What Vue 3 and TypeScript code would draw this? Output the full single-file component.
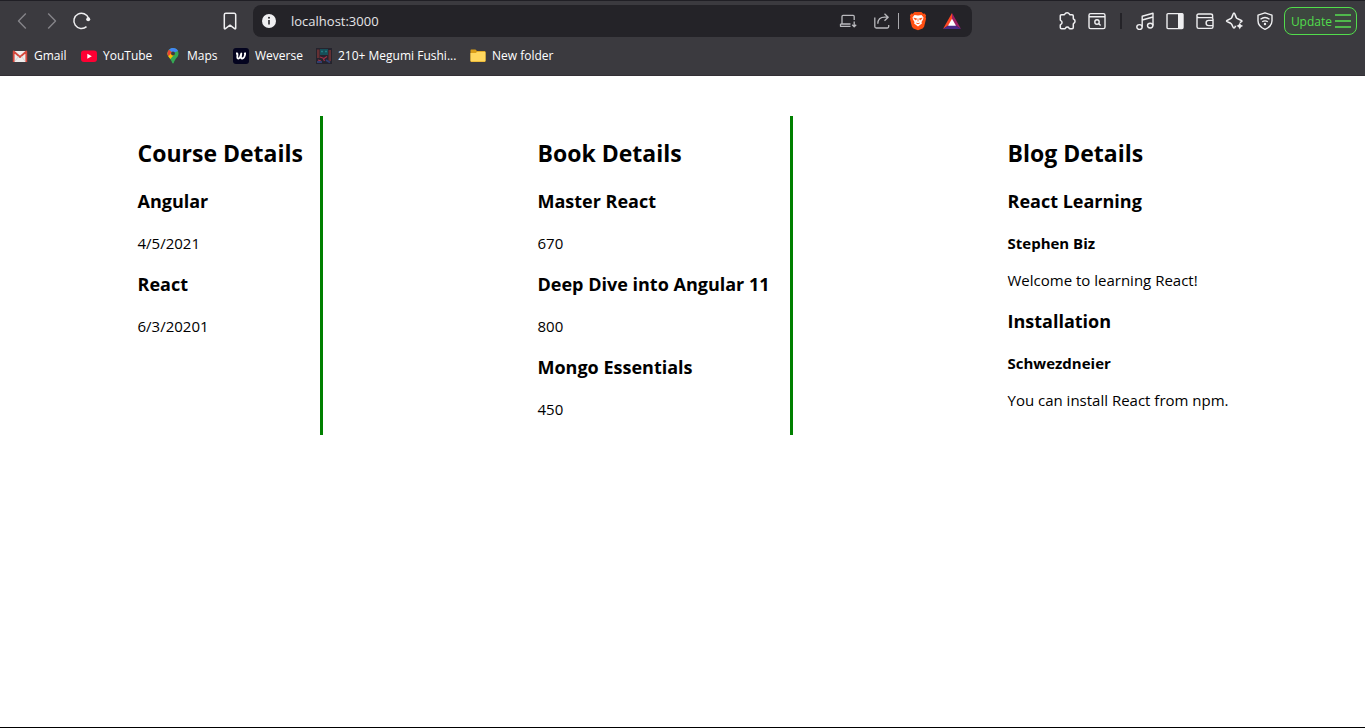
<script setup lang="ts">
interface Line { kind: 'h3' | 'h4' | 'p'; text: string }
interface Column { title: string; lines: Line[] }

const courses = [
  { name: 'Angular', date: '4/5/2021' },
  { name: 'React', date: '6/3/20201' },
]
const books = [
  { name: 'Master React', price: '670' },
  { name: 'Deep Dive into Angular 11', price: '800' },
  { name: 'Mongo Essentials', price: '450' },
]
const blogs = [
  { name: 'React Learning', author: 'Stephen Biz', text: 'Welcome to learning React!' },
  { name: 'Installation', author: 'Schwezdneier', text: 'You can install React from npm.' },
]

const columns: Column[] = [
  {
    title: 'Course Details',
    lines: courses.flatMap((c): Line[] => [{ kind: 'h3', text: c.name }, { kind: 'p', text: c.date }]),
  },
  {
    title: 'Book Details',
    lines: books.flatMap((b): Line[] => [{ kind: 'h3', text: b.name }, { kind: 'p', text: b.price }]),
  },
  {
    title: 'Blog Details',
    lines: blogs.flatMap((b): Line[] => [
      { kind: 'h3', text: b.name },
      { kind: 'h4', text: b.author },
      { kind: 'p', text: b.text },
    ]),
  },
]
</script>

<template>
  <div class="window">
    <header class="chrome">
      <div class="toolbar">
        <div class="nav">
          <button class="tool dim" aria-label="Back">
            <svg width="20" height="20" viewBox="0 0 20 20"><path d="M13.800 2.500 6.500 10l7.300 7.500" /></svg>
          </button>
          <button class="tool dim" aria-label="Forward">
            <svg width="20" height="20" viewBox="0 0 20 20"><path d="M6.200 2.500 13.500 10l-7.300 7.500" /></svg>
          </button>
          <button class="tool" aria-label="Reload">
            <svg width="20" height="20" viewBox="0 0 20 20">
              <path d="M14.500 15.600A7.600 7.600 0 1 1 16.600 7.200" stroke-width="1.500" />
              <circle cx="16.200" cy="8.300" r="2" class="fill" />
            </svg>
          </button>
          <button class="tool mark" aria-label="Bookmark this tab">
            <svg width="20" height="20" viewBox="0 0 20 20">
              <path d="M5.800 2.300h8.400a1.500 1.500 0 0 1 1.500 1.500v13.400c0 .7-.6.9-1.100.5L10 14.200l-4.600 3.500c-.5.4-1.100.2-1.100-.5V3.800a1.500 1.500 0 0 1 1.500-1.500z" stroke-width="1.500" />
            </svg>
          </button>
        </div>

        <div class="address">
          <button class="small" aria-label="Site information">
            <svg width="14" height="14" viewBox="0 0 14 14">
              <circle cx="7" cy="7" r="7" class="fill" />
              <path d="M7 6v4.500" stroke="#28272c" stroke-width="1.600" />
              <circle cx="7" cy="3.800" r="1" fill="#28272c" stroke="none" />
            </svg>
          </button>
          <input class="url" type="text" aria-label="Address" value="localhost:3000" />
          <div class="actions">
            <button class="small grey" aria-label="Install app">
              <svg width="18" height="18" viewBox="0 0 18 18">
                <path d="M15.200 8V4.400a1 1 0 0 0-1-1H4a1 1 0 0 0-1 1v7.400M1.500 12h10M1.500 12v2.300h10M15.200 9.500v5M13.200 12.700l2 2 2-2" stroke-width="1.300" />
              </svg>
            </button>
            <button class="small grey" aria-label="Share">
              <svg width="18" height="18" viewBox="0 0 18 18">
                <path d="M1.800 5.500v9a1.500 1.500 0 0 0 1.500 1.500h10.900a1.500 1.500 0 0 0 1.500-1.500V13M4.800 11.800c.1-4.200 3-6.600 7-6.600h3.400M11.500 1.800 15.200 5.200l-3.700 3.600" stroke-width="1.300" />
              </svg>
            </button>
            <span class="bar"></span>
            <button class="small" aria-label="Brave Shields">
              <svg width="18" height="20" viewBox="0 0 18 20">
                <path d="M5.500 1h7l1.700 1.700 1.500-.2 1.400 2-.5 1.500.5 1.500-2 8.200-1.500 1.800L9 19.200l-4.600-1.700-1.500-1.800-2-8.200.5-1.500-.5-1.500 1.400-2 1.500.2z" fill="#ff4f12" stroke="none" />
                <path d="m5.500 4 3.500.5 3.500-.5 2 2.500-.5 2-1.500 2.500.4 1.400L9 15.400l-3.900-3 .4-1.400L4 8.500l-.5-2z" fill="#fff" stroke="none" />
                <path d="m4.800 7.200 2.700.5L6.800 9zM13.200 7.200l-2.700.5.7 1.300zM7.300 12 9 12.800l1.700-.8M9 7.500v3" stroke="#ff4f12" fill="#ff4f12" stroke-width=".8" />
              </svg>
            </button>
            <button class="small" aria-label="Brave Rewards">
              <svg width="18" height="16" viewBox="0 0 18 16">
                <path d="M9 0 0 16l9-6z" fill="#ff4724" stroke="none" />
                <path d="m9 0 9 16-9-6z" fill="#9e1f63" stroke="none" />
                <path d="M0 16h18l-9-6z" fill="#4a2a86" stroke="none" />
                <path d="m9 5.700 4 7H5z" fill="#fff" stroke="none" />
              </svg>
            </button>
          </div>
        </div>

        <div class="extras">
          <button class="tool" aria-label="Extensions">
            <svg width="20" height="20" viewBox="0 0 20 20">
              <path d="M4.500 3.800h2.600c.5 0 .6-.3.800-.8.700-1.700 3.700-1.700 4.400 0 .2.500.3.800.8.800h2c.8 0 1.200.4 1.200 1.200v2.400c0 .5.200.7.600.9 1.500.7 1.500 3.200 0 3.900-.4.200-.6.400-.6.900v3.400c0 .8-.4 1.200-1.200 1.200h-2.300c-.5 0-.6-.3-.8-.7-.6-1.300-2.800-1.300-3.400 0-.2.400-.3.700-.8.700H4.500c-.8 0-1.200-.4-1.200-1.200v-2.300c0-.5.200-.6.600-.8 1.500-.7 1.500-3.100 0-3.800-.4-.2-.6-.4-.6-.9V5c0-.8.400-1.200 1.200-1.200z" stroke-width="1.500" />
            </svg>
          </button>
          <button class="tool" aria-label="Search tabs">
            <svg width="20" height="20" viewBox="0 0 20 20">
              <rect x="2" y="2.600" width="16" height="15" rx="1.600" />
              <path d="M2 5.800h16M11.600 12.600l2 2" />
              <circle cx="10" cy="11" r="2.200" />
            </svg>
          </button>
          <span class="divider"></span>
          <button class="tool" aria-label="Media">
            <svg width="20" height="20" viewBox="0 0 20 20">
              <path d="M7.200 15.800V5.200L18 2.300v12.200M7.200 9 18 6" />
              <ellipse cx="4.500" cy="16" rx="2.700" ry="2.400" /><ellipse cx="15.200" cy="14.600" rx="2.700" ry="2.400" />
            </svg>
          </button>
          <button class="tool" aria-label="Sidebar">
            <svg width="20" height="20" viewBox="0 0 20 20">
              <rect x="2" y="2.600" width="16" height="15" rx="1" /><path d="M13 2.600h5v15h-5z" class="fill" />
            </svg>
          </button>
          <button class="tool" aria-label="Wallet">
            <svg width="20" height="20" viewBox="0 0 20 20">
              <path d="M2 4.700v11c0 1 .7 1.700 1.700 1.700h12.600c1 0 1.700-.7 1.700-1.700V8.300c0-1-.7-1.700-1.700-1.700H3.700C1.300 6.600 1.300 3 3.700 3h12c1.300 0 1.900.7 1.900 1.700V7M18 9.400h-4.300a2.600 2.600 0 0 0 0 5.200H18" />
            </svg>
          </button>
          <button class="tool" aria-label="Leo AI">
            <svg width="20" height="20" viewBox="0 0 20 20">
              <path d="M9 2c1.200 0 1.300 3.600 2.800 5.200C13.300 8.700 17 8.800 17 10c0 .8-1 1-2.200 1.500M9 2C7.800 2 7.700 5.600 6.200 7.200 4.700 8.700 1.500 8.800 1.500 10s3.200 1.300 4.700 2.800C7.700 14.400 7.800 17 9 17c.8 0 1-.8 1.500-2.200" stroke-width="1.600" />
              <path d="M14.800 11.600c.6 2 1.300 2.700 3.400 3.400-2.100.7-2.800 1.400-3.400 3.500-.7-2.100-1.400-2.800-3.500-3.500 2.100-.7 2.800-1.400 3.500-3.400z" class="fill" />
            </svg>
          </button>
          <button class="tool" aria-label="VPN">
            <svg width="20" height="20" viewBox="0 0 20 20">
              <path d="M10 1.800 17 4.200v5.600c0 4-2.800 6.800-7 8.600-4.200-1.800-7-4.600-7-8.600V4.200z" />
              <path d="M5.500 8.200c2.700-2 6.300-2 9 0M7.200 10.800c1.700-1.200 3.900-1.200 5.600 0" stroke-width="1.300" />
              <circle cx="10" cy="13" r="1.200" class="fill" />
            </svg>
          </button>
          <button class="update">
            Update
            <svg width="16" height="14" viewBox="0 0 16 14"><path d="M0 1h16M0 7h16M0 13h16" stroke="#50b84c" stroke-width="2" /></svg>
          </button>
        </div>
      </div>

      <nav class="bookmarks" aria-label="Bookmarks">
        <a href="#">
          <svg width="16" height="16" viewBox="0 0 16 16">
            <path d="M1 3h14v11H1z" fill="#eeecec" stroke="none" />
            <path d="M1.700 14V3.500L8 9l6.300-5.500V14" stroke="#d5483d" stroke-width="1.800" />
            <path d="m3 13 3.500-4.500M13 13 9.500 8.500" stroke="#cfcccc" stroke-width=".8" />
          </svg>
          Gmail
        </a>
        <a href="#">
          <svg width="16" height="16" viewBox="0 0 16 16">
            <rect y="2.500" width="16" height="11.500" rx="3" fill="#ff0033" stroke="none" />
            <path d="m6.300 5.800 4.500 2.500-4.500 2.500z" fill="#fff" stroke="none" />
          </svg>
          YouTube
        </a>
        <a href="#">
          <svg width="16" height="16" viewBox="0 0 16 16">
            <path d="M8 0C4.800 0 2.500 2.400 2.500 5.400c0 3.800 3.300 4.600 4.700 9.400.3 1 1.300 1 1.600 0 1.400-4.800 4.700-5.600 4.700-9.400C13.500 2.400 11.200 0 8 0z" fill="#34a853" stroke="none" />
            <path d="M2.500 5.400c0 2.600 1.500 3.800 2.900 5.700L9.800 6 8 3.500 3.200 3z" fill="#fbbc04" stroke="none" />
            <path d="M2.500 5.400c0-1 .2-1.600.5-2.200l1-1.600L7 4.500 3.200 8.200z" fill="#ea4335" stroke="none" />
            <path d="M4 1.600 8 5l5-2C12.200 1 10.300 0 8 0 6.400 0 5 .6 4 1.600z" fill="#4285f4" stroke="none" />
            <circle cx="8" cy="5.400" r="2" fill="#3b3a3f" stroke="none" />
          </svg>
          Maps
        </a>
        <a href="#">
          <svg width="16" height="16" viewBox="0 0 16 16">
            <rect width="16" height="16" rx="3" fill="#04041f" stroke="none" />
            <path d="M3 5.500h1.300c.4 0 0 2.500 0 3.800 0 2 2.200 1.500 3-.8L8.300 5.500 7.900 9c-.1 2.300 2.400 1.800 3.500-.4.700-1.500.8-2.600.4-3.100h1.200" stroke="#fff" stroke-width="1.800" />
          </svg>
          Weverse
        </a>
        <a href="#">
          <svg width="16" height="16" viewBox="0 0 16 16">
            <path d="M0 0h16v16H0z" fill="#25232d" stroke="none" />
            <path d="M1 1.500h2.500V10H1zM12.500 2H15v11h-2.500z" fill="#653033" stroke="none" />
            <path d="M4 1h8v6H4z" fill="#174e58" stroke="none" />
            <path d="M5 3.500h2M9 3.500h2" stroke="#237b81" />
            <path d="m4 9 4 1.500 3-2M7 10l1.500 3M2 12l3 1" stroke="#a33048" stroke-width="1.200" />
            <path d="M1 14h5M10 12l4 2.500" stroke="#323f70" stroke-width="2" />
          </svg>
          210+ Megumi Fushi...
        </a>
        <a href="#">
          <svg width="16" height="16" viewBox="0 0 16 16">
            <path d="M.5 2.500c0-.6.4-1 1-1h4L7 3h7.500c.6 0 1 .4 1 1v9c0 .6-.4 1-1 1h-13c-.6 0-1-.4-1-1z" fill="#d99e19" stroke="none" />
            <path d="M.5 5h5.300L7.200 3.800h7.300c.6 0 1 .4 1 1v7.700c0 .6-.4 1-1 1h-13c-.6 0-1-.4-1-1z" fill="#ffd75e" stroke="none" />
          </svg>
          New folder
        </a>
      </nav>
    </header>

    <main class="page">
      <section v-for="column in columns" :key="column.title" class="column">
        <h2>{{ column.title }}</h2>
        <component :is="line.kind" v-for="line in column.lines" :key="line.text">{{ line.text }}</component>
      </section>
    </main>
  </div>
</template>

<style>
body {
  margin: 0;
}
</style>

<style scoped>
.window {
  box-sizing: border-box;
  display: flex;
  flex-direction: column;
  min-height: 100vh;
  border-bottom: 1px solid #000;
  background: #fff;
  color: #000;
  font-family: "Segoe UI", "Open Sans", "Noto Sans", sans-serif;
}

.chrome {
  border-top: 1px solid #201f25;
  border-bottom: 1px solid #332f35;
  background: #3b3a3f;
  color: #fff;
}

svg {
  display: block;
  flex: none;
  fill: none;
  stroke: currentColor;
  stroke-width: 1.4;
  stroke-linejoin: round;
}

.fill {
  fill: currentColor;
  stroke: none;
}

button {
  display: flex;
  align-items: center;
  justify-content: center;
  flex: none;
  padding: 0;
  border: 0;
  background: none;
  color: #efeff1;
  font-family: inherit;
}

.toolbar {
  display: flex;
  align-items: center;
  gap: 8px;
  height: 40px;
  padding: 0 8px 0 7px;
}

.nav {
  display: flex;
  width: 238px;
}

.tool {
  width: 30px;
  height: 30px;
}

.dim {
  color: #858489;
}

.mark {
  margin-left: auto;
}

.address {
  display: flex;
  flex: 1;
  align-items: center;
  height: 32px;
  min-width: 0;
  padding: 0 8px 0 4px;
  border-radius: 8px;
  background: #242328;
}

.small {
  width: 24px;
  height: 24px;
}

.grey {
  color: #b9b9bd;
}

.url {
  flex: 1;
  min-width: 0;
  padding: 0 10px;
  border: 0;
  outline: 0;
  background: none;
  color: #e4e4e7;
  font-family: inherit;
  font-size: 13px;
}

.actions {
  display: flex;
  align-items: center;
  gap: 10px;
}

.bar {
  width: 1px;
  height: 16px;
  margin: 0 -3px 0 -6px;
  background: #a9a9ad;
}

.extras {
  display: flex;
  align-items: center;
  margin-left: 72px;
}

.divider {
  width: 2px;
  height: 16px;
  margin: 0 8px;
  background: #242328;
}

.update {
  box-sizing: border-box;
  justify-content: flex-end;
  gap: 3px;
  width: 73px;
  height: 28px;
  margin-left: 4px;
  padding-right: 5px;
  border: 1px solid #52dd4c;
  border-radius: 8px;
  background: #3d463f;
  color: #52dd4c;
  font-size: 12px;
}

.bookmarks {
  box-sizing: border-box;
  display: grid;
  grid-template-columns: 69px 84px 68px 83px 154px auto;
  justify-content: start;
  align-items: center;
  height: 34px;
  padding: 0 12px 4px;
}

.bookmarks a {
  display: flex;
  align-items: center;
  gap: 6px;
  color: #fff;
  font-size: 12px;
  line-height: 16px;
  text-decoration: none;
  white-space: nowrap;
}

.page {
  display: grid;
  grid-template-columns: 205px 275px 260px;
  justify-content: space-around;
  padding: 40px 20px;
}

.column {
  box-sizing: border-box;
  padding: 21px 20px 15px;
  border-right: 3px solid green;
  white-space: nowrap;
}

.column:last-child {
  border-right: 0;
}

h2,
h3,
h4,
p {
  margin: 0;
}

h2 {
  margin-bottom: 20px;
  font-size: 23px;
  line-height: 32px;
}

h3 {
  margin-bottom: 19px;
  font-size: 18px;
  line-height: 25px;
}

h4 {
  margin-bottom: 16px;
  font-size: 15px;
  line-height: 21px;
}

p {
  font-size: 15px;
  line-height: 21px;
}

p + h3 {
  margin-top: 18px;
}
</style>
